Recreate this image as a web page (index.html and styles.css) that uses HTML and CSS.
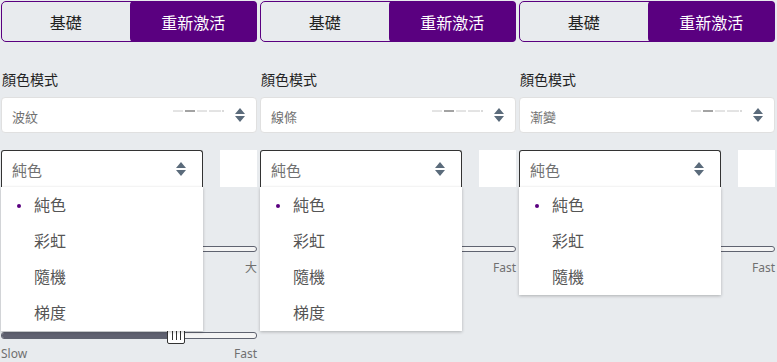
FILE: index.html
```html
<!DOCTYPE html>
<html lang="zh-Hant">
<head>
  <meta charset="UTF-8">
  <meta name="viewport" content="width=device-width, initial-scale=1.0">
  <title>顏色模式</title>
  <link rel="stylesheet" href="styles.css">
</head>
<body>
  <div class="panels">

    <!-- 面板 1 -->
    <div class="panel">
      <div class="tabs">
        <div class="tab">基礎</div>
        <div class="tab active">重新激活</div>
      </div>
      <div class="label">顏色模式</div>
      <div class="select">
        <span class="value">波紋</span>
        <svg class="preview" width="52" height="4" viewBox="0 0 52 4"><path d="M0 2h10M24 2h10M36 2h12" stroke="#c8c8c8" stroke-width="1"/><path d="M12 2h10" stroke="#666" stroke-width="1.2"/><circle cx="50" cy="2" r="0.7" fill="#999"/></svg>
        <svg class="arrows" width="10" height="14" viewBox="0 0 10 14"><path d="M5 0L10 6H0z M5 14L0 8h10z" fill="#5b6b7b"/></svg>
      </div>
      <div class="row">
        <div class="dd">
          <div class="select open">
            <span class="value">純色</span>
            <svg class="arrows" width="10" height="14" viewBox="0 0 10 14"><path d="M5 0L10 6H0z M5 14L0 8h10z" fill="#5b6b7b"/></svg>
          </div>
          <ul class="menu">
            <li class="selected">純色</li>
            <li>彩虹</li>
            <li>隨機</li>
            <li>梯度</li>
          </ul>
        </div>
        <div class="swatch"></div>
      </div>
      <div class="slider"><div class="track"></div></div>
      <div class="ends"><span>小</span><span>大</span></div>
      <div class="slider second">
        <div class="track"><div class="fill" style="width: 65%"></div></div>
        <div class="thumb" style="left: 65%"><i></i><i></i><i></i></div>
      </div>
      <div class="ends"><span>Slow</span><span>Fast</span></div>
    </div>

    <!-- 面板 2 -->
    <div class="panel">
      <div class="tabs">
        <div class="tab">基礎</div>
        <div class="tab active">重新激活</div>
      </div>
      <div class="label">顏色模式</div>
      <div class="select">
        <span class="value">線條</span>
        <svg class="preview" width="52" height="4" viewBox="0 0 52 4"><path d="M0 2h10M24 2h10M36 2h12" stroke="#c8c8c8" stroke-width="1"/><path d="M12 2h10" stroke="#666" stroke-width="1.2"/><circle cx="50" cy="2" r="0.7" fill="#999"/></svg>
        <svg class="arrows" width="10" height="14" viewBox="0 0 10 14"><path d="M5 0L10 6H0z M5 14L0 8h10z" fill="#5b6b7b"/></svg>
      </div>
      <div class="row">
        <div class="dd">
          <div class="select open">
            <span class="value">純色</span>
            <svg class="arrows" width="10" height="14" viewBox="0 0 10 14"><path d="M5 0L10 6H0z M5 14L0 8h10z" fill="#5b6b7b"/></svg>
          </div>
          <ul class="menu">
            <li class="selected">純色</li>
            <li>彩虹</li>
            <li>隨機</li>
            <li>梯度</li>
          </ul>
        </div>
        <div class="swatch"></div>
      </div>
      <div class="slider"><div class="track"></div></div>
      <div class="ends"><span>Slow</span><span>Fast</span></div>
    </div>

    <!-- 面板 3 -->
    <div class="panel">
      <div class="tabs">
        <div class="tab">基礎</div>
        <div class="tab active">重新激活</div>
      </div>
      <div class="label">顏色模式</div>
      <div class="select">
        <span class="value">漸變</span>
        <svg class="preview" width="52" height="4" viewBox="0 0 52 4"><path d="M0 2h10M24 2h10M36 2h12" stroke="#c8c8c8" stroke-width="1"/><path d="M12 2h10" stroke="#666" stroke-width="1.2"/><circle cx="50" cy="2" r="0.7" fill="#999"/></svg>
        <svg class="arrows" width="10" height="14" viewBox="0 0 10 14"><path d="M5 0L10 6H0z M5 14L0 8h10z" fill="#5b6b7b"/></svg>
      </div>
      <div class="row">
        <div class="dd">
          <div class="select open">
            <span class="value">純色</span>
            <svg class="arrows" width="10" height="14" viewBox="0 0 10 14"><path d="M5 0L10 6H0z M5 14L0 8h10z" fill="#5b6b7b"/></svg>
          </div>
          <ul class="menu">
            <li class="selected">純色</li>
            <li>彩虹</li>
            <li>隨機</li>
          </ul>
        </div>
        <div class="swatch"></div>
      </div>
      <div class="slider"><div class="track"></div></div>
      <div class="ends"><span>Slow</span><span>Fast</span></div>
    </div>

  </div>
</body>
</html>
```

FILE: styles.css
```css
body {
  margin: 0;
  background-color: #e8ebee;
  font-family: "Noto Sans", "Noto Sans CJK TC", sans-serif;
  color: #222;
  overflow: hidden;
}
.panels {
  display: flex;
  gap: 3px;
  padding: 1px 0 0 1px;
}
.panel {
  width: 256px;
  display: flex;
  flex-direction: column;
}
.tabs {
  display: flex;
  height: 41px;
  box-sizing: border-box;
  border: 1px solid #5a0080;
  border-radius: 5px;
}
.tab {
  flex: 1;
  display: flex;
  align-items: center;
  justify-content: center;
  font-size: 16px;
  color: #222;
}
.tab.active {
  background-color: #5a0080;
  color: #fff;
  border-radius: 4px;
  margin: -1px -1px -1px 0;
}
.label {
  margin-top: 28px;
  font-size: 14px;
  line-height: 20px;
  padding-left: 1px;
}
.select {
  margin-top: 7px;
  height: 36px;
  box-sizing: border-box;
  background-color: #fff;
  border: 1px solid #e0e0e0;
  border-radius: 4px;
  display: flex;
  align-items: center;
  padding: 0 11px 0 10px;
}
.select .value {
  flex: 1;
  font-size: 13px;
  color: #707070;
  padding-top: 3px;
}
.select .preview {
  margin: 0 10px 8px 0;
}
.row {
  margin-top: 17px;
  display: flex;
  gap: 17px;
  align-items: flex-start;
}
.dd {
  position: relative;
  width: 202px;
  z-index: 2;
}
.select.open {
  margin-top: 0;
  height: 37px;
  border: 1px solid #333;
  border-bottom: none;
  border-radius: 3px 3px 0 0;
  padding-right: 16px;
}
.select.open .value {
  font-size: 15px;
  padding-top: 0;
}
.menu {
  position: absolute;
  top: 37px;
  left: 0;
  width: 202px;
  margin: 0;
  padding: 0;
  list-style: none;
  background-color: #fff;
  box-shadow: 0 1px 3px rgba(0, 0, 0, 0.25);
}
.menu li {
  height: 36px;
  line-height: 36px;
  padding-left: 33px;
  font-size: 16px;
  color: #555;
  position: relative;
}
.menu li.selected::before {
  content: "";
  position: absolute;
  left: 16px;
  top: 17px;
  width: 4px;
  height: 4px;
  border-radius: 50%;
  background-color: #5a0080;
}
.swatch {
  width: 37px;
  height: 37px;
  background-color: #fff;
}
.slider {
  position: relative;
  height: 18px;
  margin-top: 53px;
  display: flex;
  align-items: center;
}
.slider.second {
  margin-top: 50px;
}
.track {
  flex: 1;
  height: 6px;
  box-sizing: border-box;
  border: 1px solid #5f6370;
  border-radius: 3px;
  background-color: #f4f4f4;
  overflow: hidden;
}
.second .track {
  height: 7px;
}
.fill {
  height: 100%;
  background-color: #5f6170;
}
.thumb {
  position: absolute;
  top: 0;
  width: 18px;
  height: 18px;
  box-sizing: border-box;
  background-color: #fff;
  border: 1px solid #333;
  border-radius: 2px;
  display: flex;
  justify-content: center;
  gap: 3px;
  padding-top: 3px;
}
.thumb i {
  width: 1px;
  height: 10px;
  background-color: #333;
}
.ends {
  display: flex;
  justify-content: space-between;
  font-size: 12px;
  line-height: 16px;
  color: #707070;
  margin-top: 2px;
}
```
